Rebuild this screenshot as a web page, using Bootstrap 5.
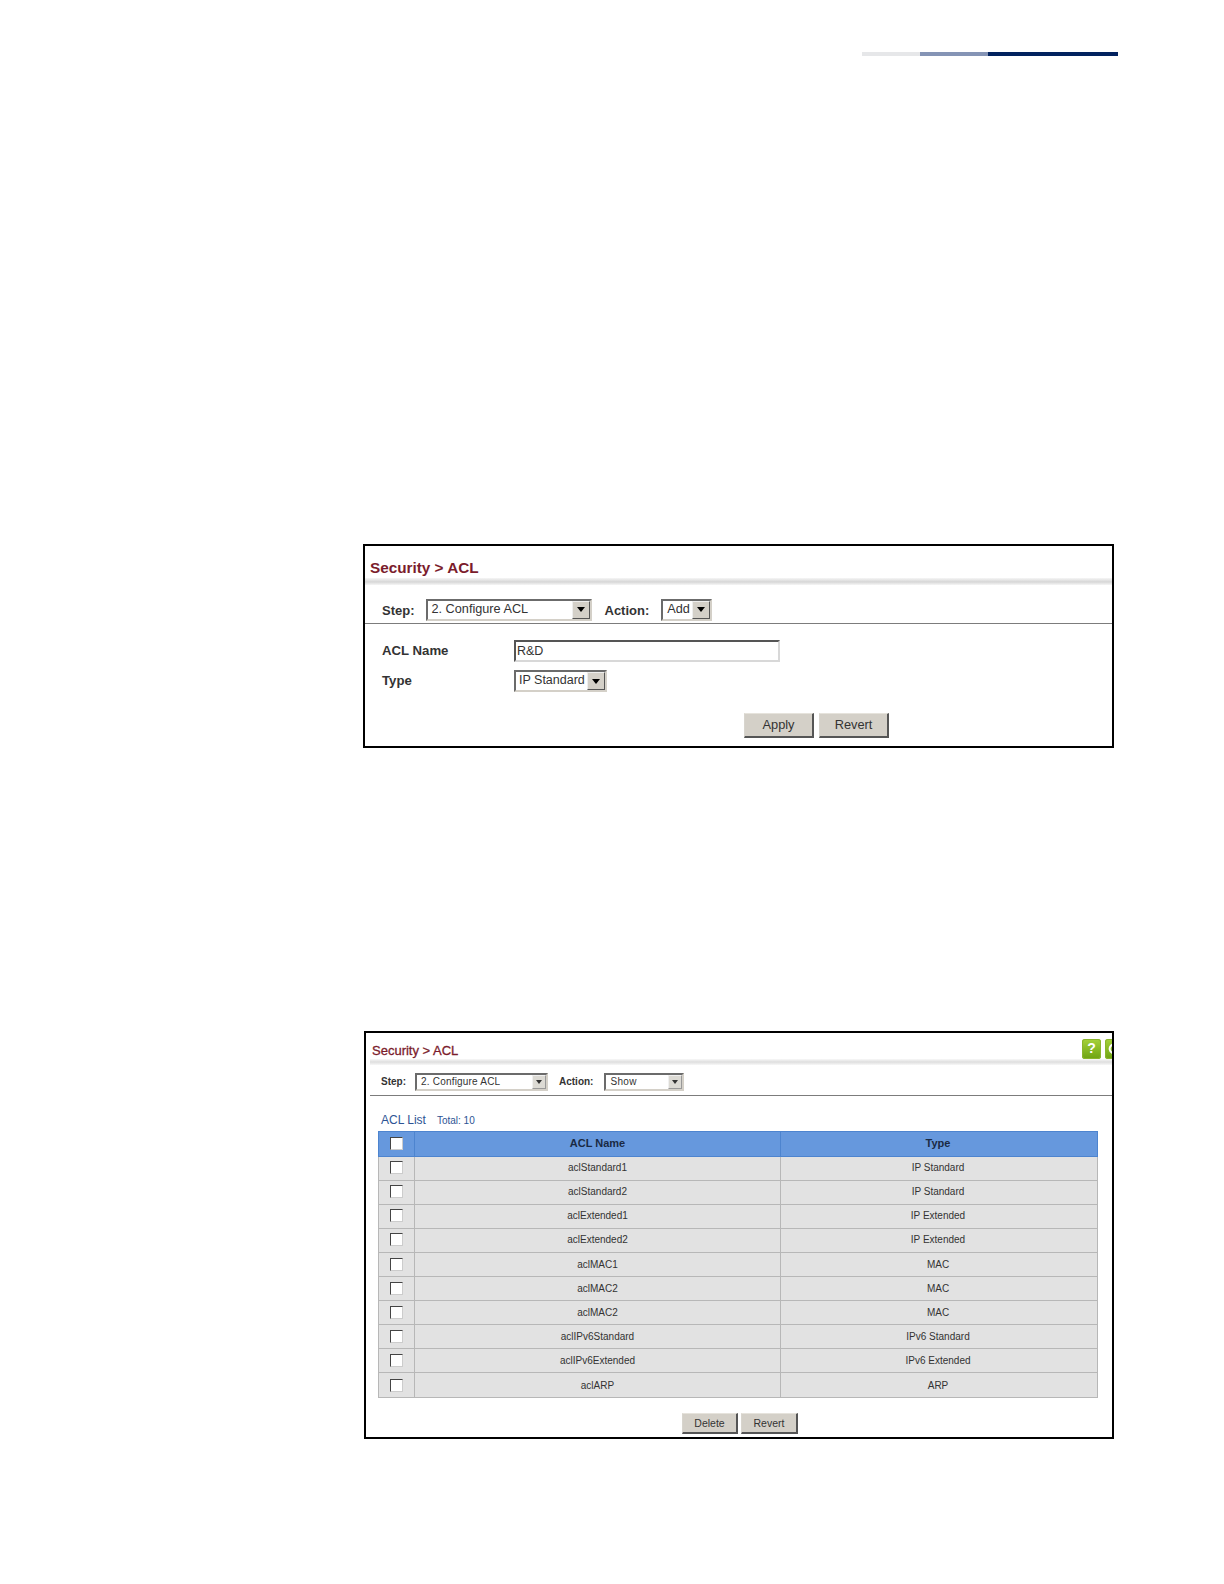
<!DOCTYPE html>
<html lang="en"><head><meta charset="utf-8"><title>Security ACL</title>
<link href="https://cdn.jsdelivr.net/npm/bootstrap@5.3.0/dist/css/bootstrap.min.css" rel="stylesheet">
<style>
html,body{background:#fff;margin:0}
body{font-family:"Liberation Sans",Arial,sans-serif;color:#222;width:1224px;height:1584px;overflow:hidden}
.topbar{margin:52px 106px 0 862px;height:4px}
.tb-a{width:58px;background:#e6e7e9}.tb-b{width:68px;background:#8594b5}.tb-c{flex:1;background:#02225f}
.shot{border:2px solid #000;background:#fff;position:relative;overflow:hidden}
.shot-one{margin:488px 110px 0 363px;height:204px}
.shot-two{margin:283px 110px 0 364px;height:408px}
.ttl{color:#7b1c2c;font-weight:700;white-space:nowrap}
.shot-one .ttl{font-size:15.3px;line-height:20px;padding:12px 0 0 5px}
.shot-two .ttl{font-size:13px;line-height:18px;padding:9px 0 0 6px;font-weight:400;-webkit-text-stroke:.3px #7b1c2c}
.shade{background:linear-gradient(#f6f6f6,#d6d6d6 55%,#f6f6f6)}
.shot-one .shade{height:7px;margin-top:0}
.shot-two .shade{height:6px;margin-top:-1px;margin-left:4px;background:linear-gradient(#f8f8f8,#dedede 50%,#f8f8f8)}
.steps{border-bottom:1px solid #7c7c7c;align-items:center}
.shot-one .steps{height:39px;padding:14px 0 3px 17px;font-size:13px}
.shot-one .steps .lab{padding-top:3px}
.shot-two .steps{height:31px;padding:8px 0 5px 11px;font-size:10px;margin-left:4px}
.lab{font-weight:700;color:#333}
.pick{background:#fff;border:2px solid;border-color:#6b6b6b #d4d0c8 #d4d0c8 #6b6b6b;display:flex;align-items:stretch;color:#333;white-space:nowrap}
.pick>span:first-child{flex:1;padding-left:4px;overflow:hidden}
.arw{background:#d4d0c8;border:1px solid;border-color:#eee #555 #555 #eee;display:flex;align-items:center;justify-content:center}
.arw::before{content:"";border:4px solid transparent;border-top:5px solid #000;border-bottom:0}
.s1-step{width:166px;height:22px;margin:0 13px 0 11px;line-height:17px;font-size:12.7px}
.s1-act{width:51px;height:22px;margin-left:12px;line-height:17px;font-size:12.7px}
.s1-type{width:93px;height:22px;line-height:17px;font-size:12.5px}
.s1-type>span:first-child{padding-left:3px}
.shot-one .arw{width:18px}
.s2-step{width:133px;height:18px;margin:0 11px 0 9px;line-height:14px;font-size:10px;letter-spacing:.2px}
.s2-act{width:80px;height:18px;margin-left:11px;line-height:14px;font-size:10px;letter-spacing:.3px}
.shot-two .arw{width:14px;border-color:#f0f0f0 #999 #999 #f0f0f0;background:#dcdad4}
.shot-two .arw::before{border-width:3px;border-top-width:4px;border-bottom:0;border-top-color:#333}
.frm{padding:16px 0 0 17px;font-size:13px}
.frm .lab{width:132px;font-size:13.2px}
.txtin{width:266px;height:22px;border:2px solid;border-color:#555 #d8d8d8 #d8d8d8 #555;background:#fff;padding:0 1px;font-size:12.5px;line-height:18px;color:#333}
.gbtn{background:#d4d0c8;border:1px solid;border-color:#e6e3dc #555 #555 #d8d5ce;border-width:1px 2px 2px 1px;color:#333;padding:0;border-radius:0;text-align:center;font-family:inherit}
.gbtn-lg{width:70px;height:25px;font-size:12.8px;line-height:20px}
.gbtn-sm{height:21px;font-size:10.5px;line-height:16px}
.acts-one{margin:21px 0 0 379px;gap:5px}
.acts-two{margin:15px 0 0 316px;gap:3px}
.hd{padding:15px 0 0 15px;height:35px;align-items:baseline}
.hd b{font-weight:400;font-size:12px;color:#2d5494}
.hd i{font-style:normal;font-size:10px;color:#2d5494;margin-left:11px}
.acl{width:720px;margin:0 0 0 12px;table-layout:fixed;border-collapse:collapse;font-size:10px}
.acl th,.acl td{padding:0;height:24px;text-align:center;vertical-align:middle;color:#333;background:#e2e2e2;border:1px solid #b7b7b7;box-shadow:none}
.acl tbody tr:nth-child(-n+4) td{padding-bottom:2px}
.acl tr:last-child td{height:25px}
.acl td:last-child,.acl th:last-child{padding-right:2px}
.acl th{background:#6698dd;border-color:#4d84cf;height:25px;font-size:11px;color:#1a2a44;font-weight:700;padding-bottom:2px}
.acl input{appearance:none;display:block;margin:0 auto;width:13px;height:13px;background:#fff;border:1px solid;border-color:#444 #ccc #ccc #444}
.hlp{position:absolute;top:6px;width:19px;height:20px;border-radius:3px;background:linear-gradient(#a6d23a,#6da312);color:#fff;font-weight:700;font-size:14px;line-height:19px;text-align:center;box-shadow:inset 0 0 0 1px #8ab52c}
.hlp-a{left:716px}.hlp-b{left:739px}
.hlp svg{display:block;margin:4px 0 0 3px}
.c-del{width:56px}.c-rev{width:57px}
</style></head>
<body>
<div class="topbar d-flex"><div class="tb-a"></div><div class="tb-b"></div><div class="tb-c"></div></div>

<div class="shot shot-one">
  <div class="ttl">Security &gt; ACL</div>
  <div class="shade"></div>
  <div class="steps d-flex">
    <span class="lab">Step:</span>
    <div class="pick s1-step"><span>2. Configure ACL</span><span class="arw"></span></div>
    <span class="lab">Action:</span>
    <div class="pick s1-act"><span>Add</span><span class="arw"></span></div>
  </div>
  <div class="frm">
    <div class="d-flex align-items-center"><span class="lab">ACL Name</span><div class="txtin">R&amp;D</div></div>
    <div class="d-flex align-items-center mt-2"><span class="lab">Type</span><div class="pick s1-type"><span>IP Standard</span><span class="arw"></span></div></div>
  </div>
  <div class="d-flex acts-one"><button class="btn gbtn gbtn-lg">Apply</button><button class="btn gbtn gbtn-lg">Revert</button></div>
</div>

<div class="shot shot-two">
  <div class="hlp hlp-a">?</div>
  <div class="hlp hlp-b"><svg width="12" height="12" viewBox="0 0 12 12" aria-hidden="true"><path d="M10 3.5A4.5 4.5 0 1 0 10.5 7" fill="none" stroke="#fff" stroke-width="2"/></svg></div>
  <div class="ttl">Security &gt; ACL</div>
  <div class="shade"></div>
  <div class="steps d-flex">
    <span class="lab">Step:</span>
    <div class="pick s2-step"><span>2. Configure ACL</span><span class="arw"></span></div>
    <span class="lab">Action:</span>
    <div class="pick s2-act"><span>Show</span><span class="arw"></span></div>
  </div>
  <div class="hd d-flex"><b>ACL List</b><i>Total: 10</i></div>
  <table class="acl">
    <colgroup><col width="36"><col width="366"><col></colgroup>
    <thead><tr><th><input type="checkbox" aria-label="all"></th><th>ACL Name</th><th>Type</th></tr></thead>
    <tbody>
      <tr><td><input type="checkbox" aria-label="r"></td><td>aclStandard1</td><td>IP Standard</td></tr>
      <tr><td><input type="checkbox" aria-label="r"></td><td>aclStandard2</td><td>IP Standard</td></tr>
      <tr><td><input type="checkbox" aria-label="r"></td><td>aclExtended1</td><td>IP Extended</td></tr>
      <tr><td><input type="checkbox" aria-label="r"></td><td>aclExtended2</td><td>IP Extended</td></tr>
      <tr><td><input type="checkbox" aria-label="r"></td><td>aclMAC1</td><td>MAC</td></tr>
      <tr><td><input type="checkbox" aria-label="r"></td><td>aclMAC2</td><td>MAC</td></tr>
      <tr><td><input type="checkbox" aria-label="r"></td><td>aclMAC2</td><td>MAC</td></tr>
      <tr><td><input type="checkbox" aria-label="r"></td><td>aclIPv6Standard</td><td>IPv6 Standard</td></tr>
      <tr><td><input type="checkbox" aria-label="r"></td><td>aclIPv6Extended</td><td>IPv6 Extended</td></tr>
      <tr><td><input type="checkbox" aria-label="r"></td><td>aclARP</td><td>ARP</td></tr>
    </tbody>
  </table>
  <div class="d-flex acts-two"><button class="btn gbtn gbtn-sm c-del">Delete</button><button class="btn gbtn gbtn-sm c-rev">Revert</button></div>
</div>
<script src="https://cdn.jsdelivr.net/npm/bootstrap@5.3.0/dist/js/bootstrap.bundle.min.js"></script>
</body></html>
